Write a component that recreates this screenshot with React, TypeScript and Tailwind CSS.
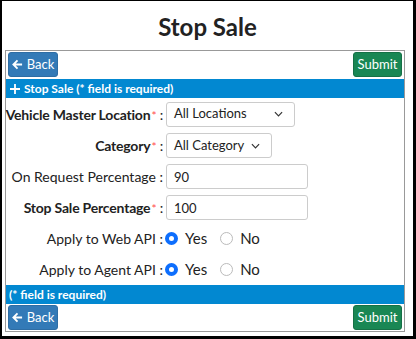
import React, { useState } from 'react'

function Required() {
  return <span className="ml-[1px] text-[12px] font-normal text-[#ff4d4d]">*</span>
}

function ArrowLeft() {
  return (
    <svg viewBox="0 0 12 12" className="h-[11px] w-[11px]" fill="none" stroke="currentColor" strokeWidth="2">
      <path d="M11 6H2M6 1.5L1.5 6L6 10.5" />
    </svg>
  )
}

function Plus() {
  return (
    <svg viewBox="0 0 10 10" className="h-[10px] w-[10px]" fill="none" stroke="currentColor" strokeWidth="1.8">
      <path d="M5 0v10M0 5h10" />
    </svg>
  )
}

function ButtonRow() {
  return (
    <div className="flex items-center justify-between px-[2px] py-[1px]">
      <button className="flex h-[25px] w-[50px] items-center justify-center gap-[4px] rounded-[3px] border border-[#2e6da4] bg-[#337ab7] text-[13px] text-white">
        <ArrowLeft />
        Back
      </button>
      <button className="flex h-[25px] w-[49px] items-center justify-center rounded-[3px] border border-[#167046] bg-[#198754] text-[13px] text-white">
        Submit
      </button>
    </div>
  )
}

function Label({ text, bold, required }: { text: string; bold?: boolean; required?: boolean }) {
  return (
    <div className={`flex w-[157px] shrink-0 justify-end whitespace-nowrap text-[14px] text-[#222] ${bold ? 'font-bold tracking-[-0.2px]' : ''}`}>
      <span>
        {text}
        {required && <Required />}
        <span className="font-normal"> :</span>
      </span>
    </div>
  )
}

function Select({ value, width }: { value: string; width: string }) {
  return (
    <div className={`flex h-[25px] ${width} items-center justify-between rounded-[3px] border border-[#ccc] pl-[7px] pr-[11px] text-[13px] text-[#222]`}>
      <span>{value}</span>
      <svg viewBox="0 0 10 6" className="h-[6px] w-[9px]" fill="none" stroke="#333" strokeWidth="1.3">
        <path d="M1 1l4 4 4-4" />
      </svg>
    </div>
  )
}

function Input({ value }: { value: string }) {
  return (
    <input
      readOnly
      value={value}
      className="h-[25px] w-[142px] rounded-[3px] border border-[#ccc] px-[7px] text-[13px] text-[#222] outline-none"
    />
  )
}

function Radio({ checked }: { checked: boolean }) {
  return checked ? (
    <span className="inline-block h-[13px] w-[13px] rounded-full border-[4px] border-[#0d6efd] bg-white" />
  ) : (
    <span className="inline-block h-[13px] w-[13px] rounded-full border border-[#bbb] bg-white" />
  )
}

function RadioRow({ label }: { label: string }) {
  const [yes, setYes] = useState(true)
  return (
    <div className="flex h-[31px] items-center">
      <Label text={label} />
      <div className="ml-[2px] flex items-center text-[15px] text-[#222]">
        <button className="flex items-center gap-[7px]" onClick={() => setYes(true)}>
          <Radio checked={yes} />
          Yes
        </button>
        <button className="ml-[13px] flex items-center gap-[7px]" onClick={() => setYes(false)}>
          <Radio checked={!yes} />
          No
        </button>
      </div>
    </div>
  )
}

export default function App() {
  return (
    <div
      className="h-[339px] w-[416px] border-b-[3px] border-l-2 border-r-[3px] border-t border-black bg-white"
      style={{ fontFamily: 'Lato, "Noto Sans", sans-serif' }}
    >
      <h1 className="pt-[8px] text-center text-[24px] font-bold leading-[36px] text-[#222]">Stop Sale</h1>
      <div className="ml-[3px] mt-[5px] w-[400px] border border-[#999]">
        <ButtonRow />
        <div className="mt-[1px] flex h-[19px] items-center gap-[4px] bg-[#0288d1] pl-[4px] pr-[3px] text-[12px] font-bold text-white">
          <Plus />
          Stop Sale (* field is required)
        </div>
        <div className="flex h-[32px] items-center">
          <Label text="Vehicle Master Location" bold required />
          <div className="ml-[3px]">
            <Select value="All Locations" width="w-[129px]" />
          </div>
        </div>
        <div className="flex h-[31px] items-center">
          <Label text="Category" bold required />
          <div className="ml-[3px]">
            <Select value="All Category" width="w-[106px]" />
          </div>
        </div>
        <div className="flex h-[31px] items-center">
          <Label text="On Request Percentage" />
          <div className="ml-[3px]">
            <Input value="90" />
          </div>
        </div>
        <div className="flex h-[31px] items-center">
          <Label text="Stop Sale Percentage" bold required />
          <div className="ml-[3px]">
            <Input value="100" />
          </div>
        </div>
        <RadioRow label="Apply to Web API" />
        <RadioRow label="Apply to Agent API" />
        <div className="flex h-[19px] items-center bg-[#0288d1] px-[3px] text-[12px] font-bold text-white">
          (* field is required)
        </div>
        <ButtonRow />
      </div>
    </div>
  )
}
